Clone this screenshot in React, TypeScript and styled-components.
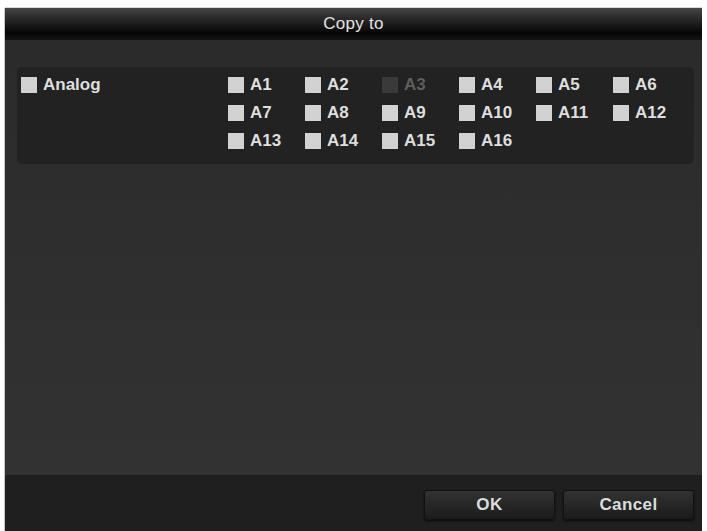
import styled, { createGlobalStyle } from "styled-components";

const GlobalStyle = createGlobalStyle`
  html, body {
    margin: 0;
    padding: 0;
    background: #ffffff;
  }
  body {
    font-family: "Liberation Sans", Arial, sans-serif;
  }
`;

const Dialog = styled.div`
  margin: 8px 0 0 5px;
  width: 697px;
  height: 523px;
  display: flex;
  flex-direction: column;
  background: #2f2f2f;
  box-shadow: -1px 0 0 #c8c8c8, 0 -1px 0 #d8d8d8;
`;

const TitleBar = styled.div`
  height: 32px;
  display: flex;
  align-items: center;
  justify-content: center;
  background: linear-gradient(#474747 0%, #2b2b2b 30%, #060606 78%, #141414 100%);
  color: #e2e2e2;
  font-size: 17px;
  letter-spacing: 0.3px;
`;

const Body = styled.div`
  flex: 1;
  padding: 27px 8px 0 12px;
  background: linear-gradient(#2b2b2b, #323232);
`;

const Panel = styled.div`
  display: flex;
  padding: 10px 0 15px 4px;
  background: #222222;
  border-radius: 5px;
`;

const GroupCell = styled.div`
  width: 207px;
`;

const ChannelGrid = styled.div`
  display: grid;
  grid-template-columns: repeat(6, 77px);
  row-gap: 12px;
`;

const Item = styled.label<{ $disabled?: boolean }>`
  display: flex;
  align-items: center;
  gap: 6px;
  height: 16px;
  font-size: 17px;
  font-weight: bold;
  color: ${(p) => (p.$disabled ? "#5e5e5e" : "#dedede")};
`;

const Box = styled.span<{ $disabled?: boolean }>`
  width: 16px;
  height: 16px;
  flex: none;
  background: ${(p) => (p.$disabled ? "#3a3a3a" : "#d2d2d2")};
`;

const Footer = styled.div`
  height: 56px;
  display: flex;
  justify-content: flex-end;
  align-items: flex-start;
  gap: 8px;
  padding: 15px 8px 0 0;
  box-sizing: border-box;
  background: #1f1f1f;
`;

const Button = styled.button`
  width: 131px;
  height: 30px;
  border: 1px solid #111;
  border-radius: 3px;
  background: linear-gradient(#323232, #1b1b1b);
  color: #dcdcdc;
  font-family: "Liberation Sans", Arial, sans-serif;
  font-size: 17px;
  font-weight: bold;
  letter-spacing: 0.4px;
  box-shadow: 0 1px 2px #0a0a0a;
`;

const channels = Array.from({ length: 16 }, (_, i) => `A${i + 1}`);

export default function App() {
  return (
    <>
      <GlobalStyle />
      <Dialog>
        <TitleBar>Copy to</TitleBar>
        <Body>
          <Panel>
            <GroupCell>
              <Item>
                <Box />
                Analog
              </Item>
            </GroupCell>
            <ChannelGrid>
              {channels.map((c) => (
                <Item key={c} $disabled={c === "A3"}>
                  <Box $disabled={c === "A3"} />
                  {c}
                </Item>
              ))}
            </ChannelGrid>
          </Panel>
        </Body>
        <Footer>
          <Button>OK</Button>
          <Button>Cancel</Button>
        </Footer>
      </Dialog>
    </>
  );
}
